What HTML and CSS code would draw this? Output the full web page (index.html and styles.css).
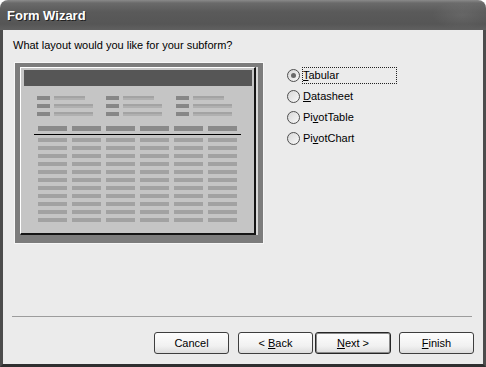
FILE: index.html
```html
<!DOCTYPE html>
<html lang="en">
<head>
  <meta charset="UTF-8" />
  <title>Form Wizard</title>
  <link rel="stylesheet" href="styles.css">
</head>
<body>

  <div class="window">
    <!-- Title bar -->
    <div class="titlebar">Form Wizard</div>

    <div class="client">
      <p class="question">What layout would you like for your subform?</p>

      <div class="main">
        <!-- Layout preview picture -->
        <div class="preview">
          <div class="panel">
            <div class="panel-bar"></div>

            <div class="labels">
              <div class="label-group">
                <div class="label-row"><span class="lbl"></span><span class="fld short"></span></div>
                <div class="label-row"><span class="lbl"></span><span class="fld"></span></div>
                <div class="label-row"><span class="lbl"></span><span class="fld"></span></div>
              </div>
              <div class="label-group">
                <div class="label-row"><span class="lbl"></span><span class="fld short"></span></div>
                <div class="label-row"><span class="lbl"></span><span class="fld"></span></div>
                <div class="label-row"><span class="lbl"></span><span class="fld"></span></div>
              </div>
              <div class="label-group">
                <div class="label-row"><span class="lbl"></span><span class="fld short"></span></div>
                <div class="label-row"><span class="lbl"></span><span class="fld"></span></div>
                <div class="label-row"><span class="lbl"></span><span class="fld"></span></div>
              </div>
            </div>

            <div class="heads"></div>
            <div class="rule"></div>

            <div class="rows">
              <div class="row"></div>
              <div class="row"></div>
              <div class="row"></div>
              <div class="row"></div>
              <div class="row"></div>
              <div class="row"></div>
              <div class="row"></div>
              <div class="row"></div>
              <div class="row"></div>
              <div class="row"></div>
              <div class="row"></div>
            </div>
          </div>
        </div>

        <!-- Layout choices -->
        <div class="options">
          <div class="option">
            <span class="radio checked"></span>
            <span class="option-label focus"><u>T</u>abular</span>
          </div>
          <div class="option">
            <span class="radio"></span>
            <span class="option-label"><u>D</u>atasheet</span>
          </div>
          <div class="option">
            <span class="radio"></span>
            <span class="option-label">Pi<u>v</u>otTable</span>
          </div>
          <div class="option">
            <span class="radio"></span>
            <span class="option-label">Pi<u>v</u>otChart</span>
          </div>
        </div>
      </div>

      <!-- Buttons -->
      <div class="footer">
        <div class="separator"></div>
        <div class="buttons">
          <button class="btn cancel">Cancel</button>
          <button class="btn back">&lt; <u>B</u>ack</button>
          <button class="btn next default"><u>N</u>ext &gt;</button>
          <button class="btn"><u>F</u>inish</button>
        </div>
      </div>
    </div>
  </div>

</body>
</html>
```

FILE: styles.css
```css
body {
  margin: 0;
  padding: 0;
  background: #fff;
  font-family: 'Liberation Sans', Arial, sans-serif;
  font-size: 11px;
  color: #000;
}

.window {
  width: 486px;
  height: 367px;
  display: flex;
  flex-direction: column;
}

.titlebar {
  height: 30px;
  padding-left: 7px;
  line-height: 31px;
  border-radius: 8px 8px 0 0;
  background:
    radial-gradient(ellipse 30px 14px at 462px 15px, rgba(255, 255, 255, 0.08), transparent),
    linear-gradient(#8a8a8a 0, #6a6a6a 3px, #5a5a5a 40%, #565656 80%, #606060 100%);
  color: #fff;
  font-size: 13px;
  font-weight: bold;
  text-shadow: 1px 1px 0 #222;
}

.client {
  flex: 1;
  display: flex;
  flex-direction: column;
  background: #ebebeb;
  border-left: 3px solid #4c4c4c;
  border-right: 3px solid #4c4c4c;
  border-bottom: 3px solid #2f2f2f;
}

.question {
  margin: 9px 0 0 10px;
  line-height: 13px;
}

.main {
  display: flex;
  margin-top: 10px;
}

/* preview picture */
.preview {
  box-sizing: border-box;
  width: 250px;
  height: 182px;
  margin-left: 11px;
  padding: 4px 7px 8px 5px;
  border: 1px solid #f6f6f6;
  background: #7c7c7c;
}

.panel {
  box-sizing: border-box;
  height: 168px;
  padding: 2px 2px 0 3px;
  border-top: 1px solid #fff;
  border-left: 1px solid #fff;
  border-right: 2px solid #151515;
  border-bottom: 2px solid #151515;
  background: #c5c5c5;
  box-shadow: 2px 0 0 #d8d8d8;
}

.panel-bar {
  height: 16px;
  background: #565656;
}

.labels {
  display: grid;
  grid-template-columns: 69px 70px 70px;
  margin-top: 10px;
  padding-left: 13px;
}

.label-group {
  display: flex;
  flex-direction: column;
  gap: 4px;
}

.label-row {
  display: flex;
  gap: 4px;
}

.lbl {
  width: 13px;
  height: 4px;
  background: #878787;
}

.fld {
  width: 39px;
  height: 4px;
  background: linear-gradient(#a3a3a3 50%, #b0b0b0 50%);
}

.fld.short {
  width: 31px;
}

.heads {
  width: 199px;
  height: 5px;
  margin: 10px 0 0 14px;
  background: repeating-linear-gradient(90deg, #8a8a8a 0 29px, transparent 29px 34px);
}

.rule {
  width: 207px;
  height: 1px;
  margin: 3px 0 0 10px;
  background: #000;
}

.rows {
  display: flex;
  flex-direction: column;
  gap: 4px;
  margin: 3px 0 0 14px;
}

.row {
  width: 199px;
  height: 4px;
  background: repeating-linear-gradient(90deg, #a2a2a2 0 29px, transparent 29px 34px);
}

/* radio options */
.options {
  display: flex;
  flex-direction: column;
  margin: 3px 0 0 23px;
}

.option {
  display: flex;
  align-items: center;
  height: 21px;
}

.radio {
  position: relative;
  box-sizing: border-box;
  width: 13px;
  height: 13px;
  border: 1px solid #4e4e4e;
  border-radius: 50%;
  background: linear-gradient(135deg, #d8d8d8, #f8f8f8);
}

.radio.checked::after {
  content: "";
  position: absolute;
  left: 3px;
  top: 3px;
  width: 5px;
  height: 5px;
  border-radius: 50%;
  background: #6a6a6a;
}

.option-label {
  box-sizing: border-box;
  margin-left: 2px;
  padding: 1px 0;
  line-height: 13px;
  border: 1px dotted transparent;
}

.option-label.focus {
  width: 95px;
  border-color: #222;
}

/* footer with buttons */
.footer {
  margin-top: auto;
  padding: 0 9px 10px 9px;
}

.separator {
  height: 1px;
  margin: 0 2px 15px 0;
  background: #9c9c9c;
}

.buttons {
  display: flex;
  justify-content: flex-end;
}

.btn {
  box-sizing: border-box;
  width: 75px;
  height: 22px;
  padding: 0;
  border: 1px solid #3e3e3e;
  border-radius: 3px;
  background: linear-gradient(#fdfdfd, #f1f1f1 65%, #dcdcdc);
  font-family: 'Liberation Sans', Arial, sans-serif;
  font-size: 11px;
  color: #000;
}

.btn.cancel {
  margin-right: 9px;
}

.btn.back {
  margin-right: 2px;
}

.btn.next {
  width: 76px;
  margin-right: 8px;
}

.btn.default {
  border-color: #262626;
  box-shadow: inset 0 0 0 1px #8a8a8a;
}
```
